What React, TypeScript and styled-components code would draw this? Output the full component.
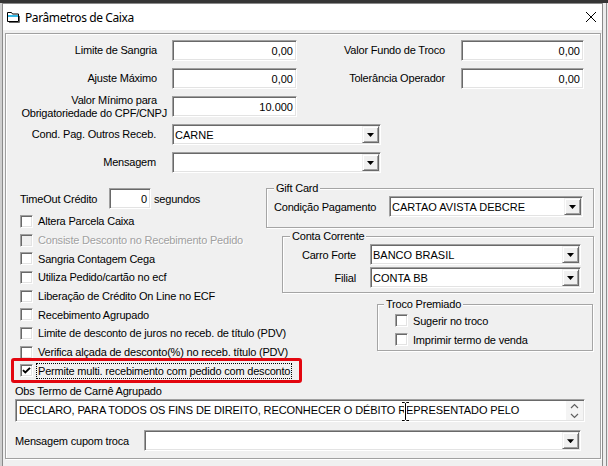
import React from 'react';
import styled, { createGlobalStyle } from 'styled-components';

const GlobalStyle = createGlobalStyle`
  html, body { margin: 0; padding: 0; }
  body {
    width: 608px; height: 466px; overflow: hidden; background: #3a3a3a;
    font-family: "Liberation Sans", Arial, sans-serif; font-size: 11px; color: #000;
  }
`;

const Screen = styled.div`
  width: 608px; height: 466px; display: flex; flex-direction: column; overflow: hidden;
`;
const TopBand = styled.div`
  height: 3px; flex: none; background: #353535;
`;
const Stage = styled.div`
  flex: 1; display: flex; min-height: 0;
`;
const LeftEdge = styled.div`
  width: 2px; flex: none; background: #cfcfcf;
`;
const RightEdge = styled.div`
  flex: 1; background: #ececec; display: flex; justify-content: flex-end; padding-right: 1px;
  &::after { content: ''; width: 1px; background: #8d8d8d; }
`;
const Window = styled.div`
  width: 601px; flex: none; box-sizing: border-box; display: flex; flex-direction: column;
  border: 1px solid #8a8a8a; border-bottom: none; background: #f0f0f0;
`;
const TitleBar = styled.div`
  height: 26px; flex: none; background: #fff; display: flex; align-items: center;
  padding: 0 5px 0 3px;
`;
const TitleText = styled.span`
  font-family: "Noto Sans", "Open Sans", sans-serif; font-size: 12px; margin-left: 4px; flex: 1;
  letter-spacing: -0.4px;
`;
const Body = styled.div`
  flex: 1; display: flex; flex-direction: column;
`;
const Panel = styled.div`
  margin: 3px 1px 0 2px; height: 426px; box-sizing: border-box; position: relative;
  border: 1px solid #a0a0a0; box-shadow: inset 1px 1px 0 #fff, 1px 1px 0 #fff;
  display: flex; flex-direction: column; padding-top: 6px;
  letter-spacing: -0.2px;
`;

/* ---------- fields ---------- */
const TopGrid = styled.div`
  display: grid; grid-template-columns: 166px 125px 164px 123px; grid-auto-rows: 21px; row-gap: 7px;
`;
const ComboGrid = styled.div`
  display: grid; grid-template-columns: 166px 209px; grid-auto-rows: 21px; row-gap: 7px; margin-top: 7px;
`;
const FieldLabel = styled.div<{ $pad: number }>`
  display: flex; flex-direction: column; justify-content: center; align-items: flex-end;
  padding-right: ${p => p.$pad}px; white-space: nowrap; line-height: 13px;
`;
const LabelLine = styled.span<{ $shift?: number }>`
  margin-right: ${p => p.$shift ?? 0}px;
`;
const Edit = styled.div<{ $w?: number; $right?: boolean }>`
  ${p => (p.$w ? `width: ${p.$w}px; flex: none;` : '')}
  height: 21px; box-sizing: border-box; background: #fff;
  border: 1px solid; border-color: #a0a0a0 #fff #fff #a0a0a0;
  box-shadow: inset 1px 1px 0 #696969, inset -1px -1px 0 #e3e3e3;
  display: flex; align-items: center; justify-content: ${p => (p.$right ? 'flex-end' : 'flex-start')};
  padding: 0 3px; white-space: nowrap; letter-spacing: 0;
`;
const Combo = styled.div<{ $w?: number }>`
  ${p => (p.$w ? `width: ${p.$w}px; flex: none;` : '')}
  height: 21px; box-sizing: border-box; background: #fff;
  border: 1px solid; border-color: #a0a0a0 #fff #fff #a0a0a0;
  box-shadow: inset 1px 1px 0 #696969, inset -1px -1px 0 #e3e3e3;
  display: flex; align-items: stretch; padding: 1px;
`;
const ComboText = styled.div`
  flex: 1; display: flex; align-items: center; padding-left: 1px; white-space: nowrap; overflow: hidden;
  letter-spacing: 0;
`;
const DropButton = styled.div`
  width: 17px; flex: none; box-sizing: border-box; background: #f0f0f0;
  border: 1px solid; border-color: #f0f0f0 #696969 #696969 #f0f0f0;
  box-shadow: inset 1px 1px 0 #fff, inset -1px -1px 0 #a0a0a0;
  display: flex; align-items: center; justify-content: center;
  &::before {
    content: ''; width: 7px; height: 4px; background: #000; margin-top: 1px;
    clip-path: polygon(0 0, 100% 0, 50% 100%);
  }
`;

/* ---------- middle ---------- */
const Middle = styled.div`
  display: flex; margin-top: 8px;
`;
const LeftCol = styled.div`
  width: 260px; flex: none; box-sizing: border-box; padding-left: 14px;
  display: flex; flex-direction: column;
`;
const RightCol = styled.div`
  width: 334px; flex: none; display: flex; flex-direction: column;
`;
const TimeOutRow = styled.div`
  display: flex; align-items: center; margin-top: 7px; height: 21px;
`;
const TimeOutLabel = styled.span`
  width: 89px; flex: none;
`;
const Unit = styled.span`
  margin-left: 3px;
`;
const CheckList = styled.div`
  display: flex; flex-direction: column; margin-top: 3px;
`;
const CheckRow = styled.div<{ $h?: number }>`
  height: ${p => p.$h ?? 18.7}px; display: flex; align-items: center; gap: 5px; white-space: nowrap;
  position: relative;
`;
const HighlightRow = styled(CheckRow)`
  &::after {
    content: ''; position: absolute; left: -9px; width: 291px; top: -4px; bottom: -3px;
    border: 3px solid #e3060f; border-radius: 3px; box-sizing: border-box;
  }
`;
const Box = styled.span<{ $disabled?: boolean }>`
  width: 13px; height: 13px; flex: none; box-sizing: border-box;
  border: 1px solid; border-color: #a0a0a0 #fff #fff #a0a0a0;
  box-shadow: inset 1px 1px 0 #696969, inset -1px -1px 0 #e3e3e3;
  background: ${p => (p.$disabled ? '#f0f0f0' : '#fff')};
  display: flex; align-items: center; justify-content: center;
`;
const CheckLabel = styled.span<{ $disabled?: boolean; $focus?: boolean }>`
  color: ${p => (p.$disabled ? '#a0a0a0' : '#000')};
  ${p => (p.$disabled ? 'text-shadow: 1px 1px 0 #fff;' : '')}
  ${p => (p.$focus ? 'outline: 1px dotted #000; outline-offset: 0; padding: 0 1px; margin-left: -1px; line-height: 14px;' : '')}
`;

const Group = styled.fieldset<{ $ml: number; $w: number; $mt: number; $pb: number }>`
  margin: ${p => p.$mt}px 0 0 ${p => p.$ml}px; width: ${p => p.$w}px; box-sizing: border-box;
  padding: 0 0 ${p => p.$pb}px 0; min-width: 0;
  border: 1px solid #a5a5a5; box-shadow: inset 1px 1px 0 #fff, 1px 1px 0 #fff;
`;
const Legend = styled.legend<{ $ml: number }>`
  margin-left: ${p => p.$ml}px; padding: 0 2px; line-height: 14px; background: #f0f0f0; position: relative;
`;
const GroupRow = styled.div<{ $mt?: number; $pl: number }>`
  display: flex; align-items: center; margin-top: ${p => p.$mt ?? 0}px; padding-left: ${p => p.$pl}px;
  white-space: nowrap;
`;
const GroupLabel = styled.span<{ $w: number; $right?: boolean }>`
  width: ${p => p.$w}px; flex: none; box-sizing: border-box;
  ${p => (p.$right ? 'text-align: right; padding-right: 14px;' : '')}
`;
const TrocoRow = styled.div`
  height: 19px; display: flex; align-items: center; gap: 5px; padding-left: 17px; white-space: nowrap;
`;

/* ---------- bottom ---------- */
const ObsLabel = styled.div`
  margin: 5px 0 0 9px; line-height: 13px;
`;
const Memo = styled.div`
  margin: 1px 0 0 9px; width: 570px; height: 23px; box-sizing: border-box; position: relative;
  background: #fff; border: 1px solid; border-color: #a0a0a0 #fff #fff #a0a0a0;
  box-shadow: inset 1px 1px 0 #696969, inset -1px -1px 0 #e3e3e3;
  display: flex; padding: 1px;
`;
const MemoText = styled.div`
  flex: 1; padding: 3px 0 0 2px; white-space: nowrap; overflow: hidden; letter-spacing: -0.1px; line-height: 13px;
`;
const ScrollBar = styled.div`
  width: 17px; flex: none; display: flex; flex-direction: column; justify-content: space-between;
  align-items: center; background: #f4f4f4; padding: 2px 0 1px;
`;
const Cursor = styled.svg`
  position: absolute; left: 385px; top: 1px;
`;
const CupomRow = styled.div`
  display: flex; align-items: center; margin: 8px 0 0 9px;
`;
const CupomLabel = styled.span`
  width: 129px; flex: none;
`;

const checks: { label: string; disabled?: boolean }[] = [
  { label: 'Altera Parcela Caixa' },
  { label: 'Consiste Desconto no Recebimento Pedido', disabled: true },
  { label: 'Sangria Contagem Cega' },
  { label: 'Utiliza Pedido/cartão no ecf' },
  { label: 'Liberação de Crédito On Line no ECF' },
  { label: 'Recebimento Agrupado' },
  { label: 'Limite de desconto de juros no receb. de título (PDV)' },
  { label: 'Verifica alçada de desconto(%) no receb. título (PDV)' },
];

const CheckMark = () => (
  <svg width="9" height="9" viewBox="0 0 9 9">
    <path d="M1 4.2 L3.3 6.5 L8 1.8" stroke="#000" strokeWidth="1.9" fill="none" />
  </svg>
);

const Chevron = ({ up }: { up?: boolean }) => (
  <svg width="9" height="6" viewBox="0 0 9 6">
    <path d={up ? 'M1 5 L4.5 1.5 L8 5' : 'M1 1 L4.5 4.5 L8 1'} stroke="#606060" strokeWidth="1.2" fill="none" />
  </svg>
);

const Dropdown = ({ w, text }: { w: number; text?: string }) => (
  <Combo $w={w}>
    <ComboText>{text}</ComboText>
    <DropButton />
  </Combo>
);

export default function App() {
  return (
    <>
      <GlobalStyle />
      <Screen>
        <TopBand />
        <Stage>
          <LeftEdge />
          <Window>
            <TitleBar>
              <svg width="15" height="14" viewBox="0 0 15 14">
                <path d="M1.5 2.5 H5.5 L6.5 4 H12.5 V11.5 H1.5 Z" fill="#fff" stroke="#000" />
                <rect x="2" y="5" width="10" height="2" fill="#35b9e6" />
                <path d="M13.5 6 V12.5 H3" stroke="#666" fill="none" />
              </svg>
              <TitleText>Parâmetros de Caixa</TitleText>
              <svg width="12" height="12" viewBox="0 0 12 12">
                <path d="M1 1 L11 11 M11 1 L1 11" stroke="#000" strokeWidth="1" />
              </svg>
            </TitleBar>
            <Body>
              <Panel>
                <TopGrid>
                  <FieldLabel $pad={15}>Limite de Sangria</FieldLabel>
                  <Edit $right>0,00</Edit>
                  <FieldLabel $pad={16}>Valor Fundo de Troco</FieldLabel>
                  <Edit $right>0,00</Edit>
                  <FieldLabel $pad={15}>Ajuste Máximo</FieldLabel>
                  <Edit $right>0,00</Edit>
                  <FieldLabel $pad={16}>Tolerância Operador</FieldLabel>
                  <Edit $right>0,00</Edit>
                  <FieldLabel $pad={5}>
                    <LabelLine $shift={10}>Valor Mínimo para</LabelLine>
                    <LabelLine>Obrigatoriedade do CPF/CNPJ</LabelLine>
                  </FieldLabel>
                  <Edit $right>10.000</Edit>
                </TopGrid>
                <ComboGrid>
                  <FieldLabel $pad={16}>Cond. Pag. Outros Receb.</FieldLabel>
                  <Dropdown w={209} text="CARNE" />
                  <FieldLabel $pad={16}>Mensagem</FieldLabel>
                  <Dropdown w={209} />
                </ComboGrid>
                <Middle>
                  <LeftCol>
                    <TimeOutRow>
                      <TimeOutLabel>TimeOut Crédito</TimeOutLabel>
                      <Edit $w={42} $right>0</Edit>
                      <Unit>segundos</Unit>
                    </TimeOutRow>
                    <CheckList>
                      {checks.map(c => (
                        <CheckRow key={c.label}>
                          <Box $disabled={c.disabled} />
                          <CheckLabel $disabled={c.disabled}>{c.label}</CheckLabel>
                        </CheckRow>
                      ))}
                      <HighlightRow>
                        <Box>
                          <CheckMark />
                        </Box>
                        <CheckLabel $focus>Permite multi. recebimento com pedido com desconto</CheckLabel>
                      </HighlightRow>
                    </CheckList>
                  </LeftCol>
                  <RightCol>
                    <Group $ml={0} $w={328} $mt={0} $pb={10}>
                      <Legend $ml={7}>Gift Card</Legend>
                      <GroupRow $mt={1} $pl={7}>
                        <GroupLabel $w={115}>Condição Pagamento</GroupLabel>
                        <Dropdown w={194} text="CARTAO AVISTA DEBCRE" />
                      </GroupRow>
                    </Group>
                    <Group $ml={16} $w={312} $mt={1} $pb={4}>
                      <Legend $ml={7}>Conta Corrente</Legend>
                      <GroupRow $mt={1} $pl={0}>
                        <GroupLabel $w={87} $right>Carro Forte</GroupLabel>
                        <Dropdown w={211} text="BANCO BRASIL" />
                      </GroupRow>
                      <GroupRow $mt={2} $pl={0}>
                        <GroupLabel $w={87} $right>Filial</GroupLabel>
                        <Dropdown w={211} text="CONTA BB" />
                      </GroupRow>
                    </Group>
                    <Group $ml={111} $w={216} $mt={4} $pb={1}>
                      <Legend $ml={6}>Troco Premiado</Legend>
                      <TrocoRow>
                        <Box />
                        <span>Sugerir no troco</span>
                      </TrocoRow>
                      <TrocoRow>
                        <Box />
                        <span>Imprimir termo de venda</span>
                      </TrocoRow>
                    </Group>
                  </RightCol>
                </Middle>
                <ObsLabel>Obs Termo de Carnê Agrupado</ObsLabel>
                <Memo>
                  <MemoText>DECLARO, PARA TODOS OS FINS DE DIREITO, RECONHECER O DÉBITO REPRESENTADO PELO</MemoText>
                  <ScrollBar>
                    <Chevron up />
                    <Chevron />
                  </ScrollBar>
                  <Cursor width="9" height="21" viewBox="0 0 9 21">
                    <path d="M1 1.5 H3.5 L4.5 2.5 L5.5 1.5 H8 M4.5 2.5 V18.5 M1 19.5 H3.5 L4.5 18.5 L5.5 19.5 H8" stroke="#fff" strokeWidth="3" fill="none" />
                    <path d="M1 1.5 H3.5 L4.5 2.5 L5.5 1.5 H8 M4.5 2.5 V18.5 M1 19.5 H3.5 L4.5 18.5 L5.5 19.5 H8" stroke="#000" strokeWidth="1" fill="none" />
                  </Cursor>
                </Memo>
                <CupomRow>
                  <CupomLabel>Mensagem cupom troca</CupomLabel>
                  <Dropdown w={437} />
                </CupomRow>
              </Panel>
            </Body>
          </Window>
          <RightEdge />
        </Stage>
      </Screen>
    </>
  );
}
